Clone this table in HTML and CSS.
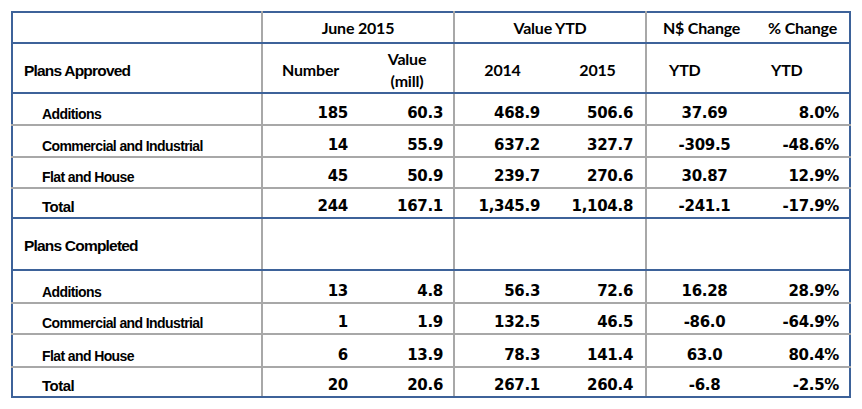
FILE: index.html
```html
<!DOCTYPE html>
<html lang="en">
<head>
<meta charset="utf-8">
<title>Building Plans</title>
<link rel="stylesheet" href="styles.css">
</head>
<body>
<table class="plans">
  <colgroup>
    <col class="c-label">
    <col class="c-num">
    <col class="c-num">
    <col class="c-num">
    <col class="c-num">
    <col class="c-chg">
    <col class="c-pct">
  </colgroup>
  <tr class="r-head1 blue">
    <td class="dr"></td>
    <td class="hd center dr" colspan="2">June 2015</td>
    <td class="hd center dr" colspan="2">Value YTD</td>
    <td class="hd center">N$ Change</td>
    <td class="hd center">% Change</td>
  </tr>
  <tr class="r-head2 blue">
    <td class="sec dr">Plans Approved</td>
    <td class="hd center">Number</td>
    <td class="hd two center pv dr">Value<br>(mill)</td>
    <td class="hd center">2014</td>
    <td class="hd center dr">2015</td>
    <td class="hd pytd1">YTD</td>
    <td class="hd pytd2">YTD</td>
  </tr>
  <tr class="r32">
    <td class="lbl dr">Additions</td>
    <td class="num">185</td><td class="num dr">60.3</td>
    <td class="num">468.9</td><td class="num p15 dr">506.6</td>
    <td class="num chg">37.69</td><td class="num">8.0%</td>
  </tr>
  <tr class="r32">
    <td class="lbl dr">Commercial and Industrial</td>
    <td class="num">14</td><td class="num dr">55.9</td>
    <td class="num">637.2</td><td class="num p15 dr">327.7</td>
    <td class="num chg">-309.5</td><td class="num">-48.6%</td>
  </tr>
  <tr class="r31">
    <td class="lbl dr">Flat and House</td>
    <td class="num">45</td><td class="num dr">50.9</td>
    <td class="num">239.7</td><td class="num p15 dr">270.6</td>
    <td class="num chg">30.87</td><td class="num">12.9%</td>
  </tr>
  <tr class="r30 blue">
    <td class="lbl tot dr">Total</td>
    <td class="num">244</td><td class="num dr">167.1</td>
    <td class="num">1,345.9</td><td class="num p15 dr">1,104.8</td>
    <td class="num chg">-241.1</td><td class="num">-17.9%</td>
  </tr>
  <tr class="r-sec blue">
    <td class="sec dr">Plans Completed</td>
    <td></td><td class="dr"></td>
    <td></td><td class="dr"></td>
    <td></td><td></td>
  </tr>
  <tr class="r33">
    <td class="lbl dr">Additions</td>
    <td class="num">13</td><td class="num dr">4.8</td>
    <td class="num">56.3</td><td class="num p15 dr">72.6</td>
    <td class="num chg">16.28</td><td class="num">28.9%</td>
  </tr>
  <tr class="r31">
    <td class="lbl dr">Commercial and Industrial</td>
    <td class="num">1</td><td class="num dr">1.9</td>
    <td class="num">132.5</td><td class="num p15 dr">46.5</td>
    <td class="num chg">-86.0</td><td class="num">-64.9%</td>
  </tr>
  <tr class="r33">
    <td class="lbl dr">Flat and House</td>
    <td class="num">6</td><td class="num dr">13.9</td>
    <td class="num">78.3</td><td class="num p15 dr">141.4</td>
    <td class="num chg">63.0</td><td class="num">80.4%</td>
  </tr>
  <tr class="r30 blue">
    <td class="lbl tot dr">Total</td>
    <td class="num">20</td><td class="num dr">20.6</td>
    <td class="num">267.1</td><td class="num p15 dr">260.4</td>
    <td class="num chg">-6.8</td><td class="num">-2.5%</td>
  </tr>
</table>
</body>
</html>
```
FILE: styles.css
```css
html, body {
  margin: 0;
  padding: 0;
  background: #ffffff;
}

body {
  width: 862px;
  height: 409px;
  overflow: hidden;
  color: #000000;
}

.plans {
  margin: 11px 0 0 11px;
  width: 840px;
  table-layout: fixed;
  border-collapse: collapse;
  border: 2px solid #3d6299;
}

.c-label { width: 250px; }
.c-num { width: 96px; }
.c-chg { width: 110px; }
.c-pct { width: 94px; }

.plans td {
  padding: 0;
  vertical-align: bottom;
  border-bottom: 2px solid #a8a8a8;
  white-space: nowrap;
  overflow: visible;
}

.plans tr.blue td {
  border-bottom: 2px solid #3d6299;
}

.plans td.dr {
  border-right: 2px solid #a8a8a8;
}

.r-head1 { height: 31px; }
.r-head2 { height: 50px; }
.r32 { height: 32px; }
.r31 { height: 31px; }
.r30 { height: 30px; }
.r33 { height: 33px; }
.r-sec { height: 52px; }

/* header text */
.plans .hd {
  font-family: Lato, "Open Sans", sans-serif;
  font-weight: 700;
  font-size: 16px;
  line-height: 18px;
  letter-spacing: -0.2px;
}

.plans .r-head1 .hd { padding-bottom: 5px; }
.plans .r-head2 .hd { padding-bottom: 13px; }
.plans .r-head2 .hd.two {
  line-height: 22px;
  padding-bottom: 0;
}

.plans .center { text-align: center; }
.plans .pv { padding-left: 3px; }
.plans .pytd1 { padding-left: 22px; }
.plans .pytd2 { padding-left: 15px; }

/* section labels */
.plans .sec {
  font-family: "Liberation Sans", Arial, sans-serif;
  font-weight: 700;
  font-size: 15.5px;
  line-height: 18px;
  letter-spacing: -0.8px;
  padding-left: 11px;
}

.plans .r-head2 .sec { padding-bottom: 12px; }
.plans .r-sec .sec { padding-bottom: 14px; }

/* row labels */
.plans .lbl {
  font-family: "Liberation Sans", Arial, sans-serif;
  font-weight: 700;
  font-size: 14px;
  line-height: 16px;
  letter-spacing: -0.6px;
  padding-left: 29px;
  padding-bottom: 2px;
}

.plans .lbl.tot {
  font-size: 15px;
  letter-spacing: -0.5px;
}

/* numbers */
.plans .num {
  font-family: "DejaVu Sans", Verdana, sans-serif;
  font-weight: 700;
  font-size: 15px;
  line-height: 16px;
  letter-spacing: -0.3px;
  text-align: right;
  padding-right: 10px;
  padding-bottom: 3px;
}

.plans .num.p15 { padding-right: 12px; }

.plans .num.chg {
  text-align: center;
  padding-right: 0;
  padding-left: 6px;
}
```
